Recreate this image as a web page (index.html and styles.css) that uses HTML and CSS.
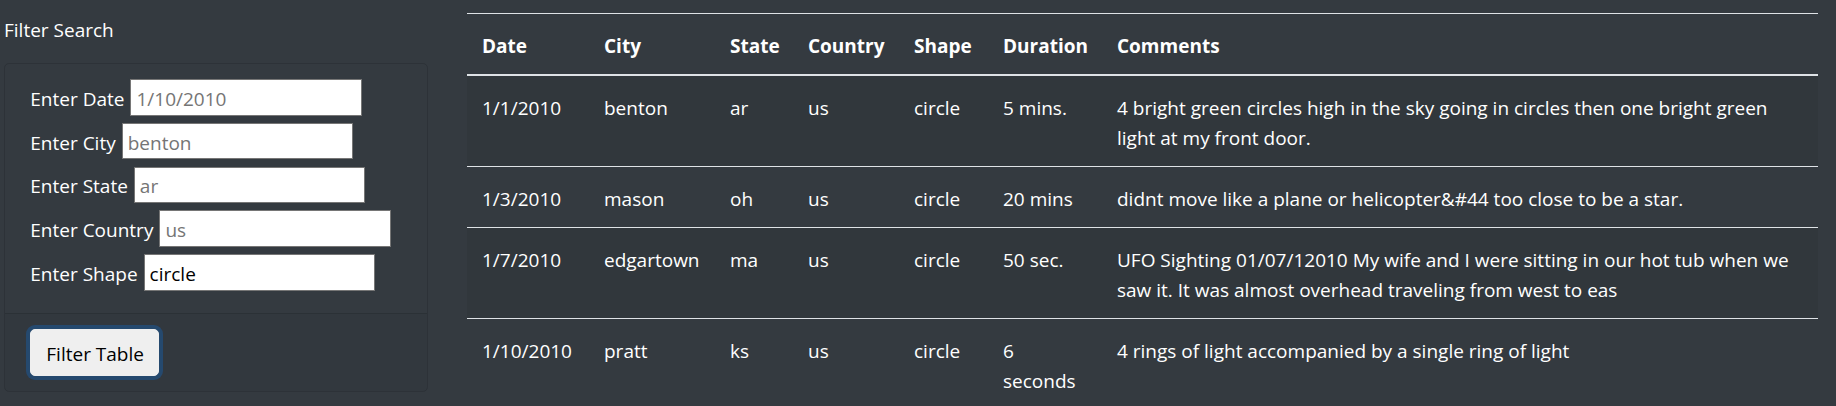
FILE: index.html
```html
<!DOCTYPE html>
<html lang="en">
<head>
<meta charset="utf-8">
<title>UFO Sightings</title>
<link rel="stylesheet" href="styles.css">
</head>
<body>
<div class="page">
  <aside class="sidebar">
    <div class="sidebar-title">Filter Search</div>
    <form class="card">
      <div class="card-body">
        <div class="field"><label for="datetime">Enter Date</label><input class="in-date" id="datetime" type="text" placeholder="1/10/2010"></div>
        <div class="field"><label for="city">Enter City</label><input id="city" type="text" placeholder="benton"></div>
        <div class="field"><label for="state">Enter State</label><input id="state" type="text" placeholder="ar"></div>
        <div class="field"><label for="country">Enter Country</label><input id="country" type="text" placeholder="us"></div>
        <div class="field"><label for="shape">Enter Shape</label><input id="shape" type="text" value="circle"></div>
      </div>
      <div class="card-footer">
        <button class="btn" type="button">Filter Table</button>
      </div>
    </form>
  </aside>
  <main class="content">
    <table class="ufo-table">
      <colgroup>
        <col class="c-date"><col class="c-city"><col class="c-state"><col class="c-country"><col class="c-shape"><col class="c-duration"><col class="c-comments">
      </colgroup>
      <thead>
        <tr><th>Date</th><th>City</th><th>State</th><th>Country</th><th>Shape</th><th>Duration</th><th>Comments</th></tr>
      </thead>
      <tbody>
        <tr><td>1/1/2010</td><td>benton</td><td>ar</td><td>us</td><td>circle</td><td>5 mins.</td><td>4 bright green circles high in the sky going in circles then one bright green light at my front door.</td></tr>
        <tr><td>1/3/2010</td><td>mason</td><td>oh</td><td>us</td><td>circle</td><td>20 mins</td><td>didnt move like a plane or helicopter&amp;#44 too close to be a star.</td></tr>
        <tr><td>1/7/2010</td><td>edgartown</td><td>ma</td><td>us</td><td>circle</td><td>50 sec.</td><td>UFO Sighting 01/07/12010 My wife and I were sitting in our hot tub when we saw it. It was almost overhead traveling from west to eas</td></tr>
        <tr><td>1/10/2010</td><td>pratt</td><td>ks</td><td>us</td><td>circle</td><td>6 seconds</td><td>4 rings of light accompanied by a single ring of light</td></tr>
      </tbody>
    </table>
  </main>
</div>
</body>
</html>
```
FILE: styles.css
```css
html, body {
  margin: 0;
  padding: 0;
}
body {
  background: #343a40;
  color: #fff;
  font-family: "Open Sans", "Noto Sans", Arial, sans-serif;
  font-size: 19px;
  line-height: 30px;
}
.page {
  display: flex;
  align-items: flex-start;
}
.sidebar {
  width: 424px;
  margin-left: 4px;
  padding-top: 13px;
  flex: none;
}
.sidebar-title {
  height: 28.5px;
  padding-top: 1.5px;
  line-height: 30px;
  margin-bottom: 20px;
}
.card {
  margin: 0;
  border: 1px solid rgba(0, 0, 0, 0.125);
  border-radius: 5px;
  overflow: hidden;
}
.card-body {
  padding: 11.5px 25px 19px 25.3px;
}
.field {
  display: flex;
  align-items: center;
  gap: 6px;
  height: 43.75px;
}
.field label {
  white-space: nowrap;
  padding-top: 3px;
}
.field input {
  box-sizing: border-box;
  width: 231.5px;
  height: 36.5px;
  border: 1px solid #767676;
  border-radius: 0;
  padding: 3px 5px 0;
  margin: 0;
  background: #fff;
  color: #000;
  font-family: "Open Sans", "Noto Sans", Arial, sans-serif;
  font-size: 19px;
  outline: none;
}
.field input::placeholder {
  color: #757575;
  opacity: 1;
}
.card-footer {
  border-top: 1px solid rgba(0, 0, 0, 0.125);
  background: rgba(0, 0, 0, 0.03);
  padding: 15px 25px 15px 25.3px;
}
.btn {
  display: block;
  box-sizing: border-box;
  height: 46.7px;
  padding: 3px 14px 0 15px;
  border: 1px solid #efefef;
  border-radius: 5px;
  background: #efefef;
  color: #000;
  font-family: "Open Sans", "Noto Sans", Arial, sans-serif;
  font-size: 19px;
  line-height: 30px;
  box-shadow: 0 0 0 4px rgba(0, 123, 255, 0.25);
  cursor: pointer;
}
.content {
  margin-left: 39px;
  width: 1351px;
  flex: none;
  padding-top: 13px;
}
.ufo-table {
  width: 100%;
  table-layout: fixed;
  border-collapse: collapse;
  color: #fff;
}
.c-date { width: 122px; }
.c-city { width: 126px; }
.c-state { width: 78px; }
.c-country { width: 106px; }
.c-shape { width: 89px; }
.c-duration { width: 114px; }
.ufo-table th,
.ufo-table td {
  padding: 16.5px 15px 13.5px;
  text-align: left;
  vertical-align: top;
  border-top: 1px solid #dee2e6;
}
.ufo-table th {
  font-weight: 700;
  border-bottom: 2px solid #dee2e6;
}
.ufo-table tbody tr:nth-child(odd) {
  background: rgba(0, 0, 0, 0.05);
}
```
